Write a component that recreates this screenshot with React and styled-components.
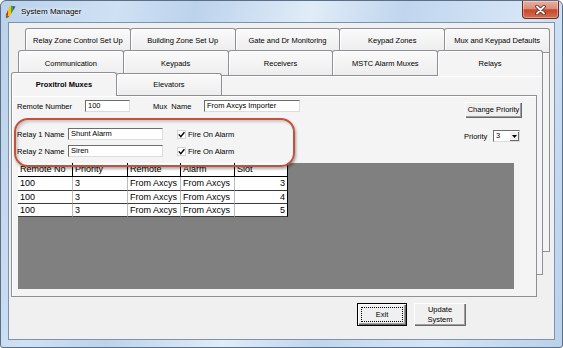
import React from 'react';
import styled, { createGlobalStyle } from 'styled-components';

// page reset + base font
const GlobalStyle = createGlobalStyle`
    html, body {
        margin: 0;
        padding: 0;
        background: #ffffff;
    }
    body {
        font-family: "Liberation Sans", Arial, sans-serif;
        color: #000;
    }
`;

// Aero window frame
const Window = styled.div`
    width: 563px;
    height: 348px;
    box-sizing: border-box;
    border: 1px solid #5b6f86;
    border-radius: 6px 6px 3px 3px;
    background: linear-gradient(105deg, #b9d1ea 0%, #cfe1f4 18%, #bcd3ec 30%, #e0ecf8 48%, #c0d6ee 62%, #d5e5f6 80%, #b9d1ea 100%);
    display: flex;
    flex-direction: column;
    overflow: hidden;
`;

const TitleBar = styled.div`
    height: 21px;
    flex: none;
    display: flex;
    align-items: center;
    padding: 0 3px 0 4px;
`;

const TitleIcon = styled.svg`
    width: 11px;
    height: 14px;
    margin-right: 5px;
    flex: none;
`;

const TitleText = styled.div`
    font-size: 8px;
    text-shadow: 0 0 5px #ffffff, 0 0 3px #ffffff;
`;

const CloseButton = styled.div`
    margin-left: auto;
    align-self: flex-start;
    width: 37px;
    height: 18px;
    box-sizing: border-box;
    border: 1px solid #6e2a1e;
    border-top: none;
    border-radius: 0 0 4px 4px;
    background: linear-gradient(#e9b0a2 0%, #dc8c78 45%, #c7472d 52%, #d2704f 100%);
    box-shadow: inset 0 0 0 1px rgba(255, 255, 255, 0.35);
    display: flex;
    align-items: center;
    justify-content: center;
`;

// grey client area inside the frame
const Client = styled.div`
    flex: 1;
    margin: 0 7px 7px 7px;
    box-sizing: border-box;
    border: 1px solid #7d93ad;
    background: #f0f0f0;
    display: flex;
    flex-direction: column;
`;

// the three tab rows are drawn as stacked pages sharing one grid cell
const PageStack = styled.div`
    display: grid;
`;

const Page = styled.div`
    grid-area: 1 / 1;
    align-self: start;
    justify-self: start;
    margin: ${p => p.$y}px 0 0 ${p => p.$x}px;
    width: ${p => p.$w}px;
    height: ${p => p.$h}px;
    display: flex;
    flex-direction: column;
`;

const TabRow = styled.div`
    display: flex;
    flex: none;
    height: ${p => p.$h}px;
`;

const Tab = styled.div`
    flex: ${p => (p.$w ? `0 0 ${p.$w}px` : '1 1 0')};
    box-sizing: border-box;
    margin-left: -1px;
    margin-top: ${p => (p.$active ? 0 : 1)}px;
    margin-bottom: ${p => (p.$open ? -1 : 0)}px;
    &:first-child {
        margin-left: 0;
    }
    border: 1px solid #8e9096;
    border-bottom: none;
    border-radius: 3px 3px 0 0;
    background: ${p => (p.$open ? '#f4f4f4' : 'linear-gradient(#fafafa, #ededed)')};
    box-shadow: inset 1px 1px 0 #ffffff;
    display: flex;
    align-items: center;
    justify-content: center;
    font-size: 7.5px;
    font-weight: ${p => (p.$active ? 'bold' : 'normal')};
    white-space: nowrap;
    position: relative;
    z-index: ${p => (p.$open ? 1 : 0)};
`;

const PageBody = styled.div`
    flex: 1;
    position: relative;
    box-sizing: border-box;
    border: 1px solid #8e9096;
    background: #f4f4f4;
    box-shadow: inset 1px 1px 0 #ffffff;
    padding: 4px 14px 0 5px;
`;

const FormArea = styled.div`
    display: flex;
`;

const LeftCol = styled.div`
    display: flex;
    flex-direction: column;
`;

const RightCol = styled.div`
    margin-left: auto;
    width: 58px;
    display: flex;
    flex-direction: column;
`;

const FieldRow = styled.div`
    display: flex;
    align-items: center;
    height: 12px;
    margin-top: ${p => p.$mt || 0}px;
`;

const Label = styled.div`
    width: ${p => p.$w}px;
    margin-left: ${p => p.$ml || 0}px;
    flex: none;
    font-size: 7.5px;
    white-space: pre;
`;

const TextBox = styled.div`
    width: ${p => p.$w}px;
    height: 12px;
    flex: none;
    box-sizing: border-box;
    background: #ffffff;
    border: 1px solid;
    border-color: #6d6d6d #dcdcdc #dcdcdc #6d6d6d;
    font-size: 7.5px;
    line-height: 10px;
    padding-left: 2px;
    white-space: nowrap;
    overflow: hidden;
`;

const CheckBox = styled.svg`
    width: 9px;
    height: 9px;
    flex: none;
    margin-left: ${p => p.$ml || 0}px;
`;

const CheckText = styled.div`
    margin-left: 2px;
    font-size: 7.5px;
    white-space: nowrap;
`;

// classic raised push button
const PushButton = styled.div`
    box-sizing: border-box;
    width: ${p => p.$w}px;
    height: ${p => p.$h}px;
    margin-top: ${p => p.$mt || 0}px;
    margin-left: ${p => p.$ml || 0}px;
    flex: none;
    background: #f0f0f0;
    border: ${p => (p.$default ? '1px solid #000' : 'none')};
    box-shadow: inset 1px 1px 0 #ffffff, inset -1px -1px 0 #696969, inset -2px -2px 0 #a0a0a0;
    display: flex;
    align-items: stretch;
    justify-content: center;
    padding: ${p => (p.$default ? 3 : 1)}px;
    font-size: 7.5px;
    line-height: 10px;
    text-align: center;
`;

const ButtonLabel = styled.div`
    flex: 1;
    display: flex;
    align-items: center;
    justify-content: center;
    white-space: nowrap;
    border: 1px dotted ${p => (p.$focus ? '#000' : 'transparent')};
`;

const Combo = styled.div`
    width: 27px;
    height: 12px;
    flex: none;
    box-sizing: border-box;
    background: #ffffff;
    border: 1px solid;
    border-color: #6d6d6d #dcdcdc #dcdcdc #6d6d6d;
    display: flex;
    align-items: stretch;
    font-size: 7.5px;
    line-height: 10px;
`;

const ComboValue = styled.div`
    flex: 1;
    padding-left: 2px;
`;

const ComboArrow = styled.div`
    width: 10px;
    background: #f0f0f0;
    box-shadow: inset 1px 1px 0 #ffffff, inset -1px -1px 0 #696969;
    display: flex;
    align-items: center;
    justify-content: center;
`;

// the flex grid with its grey empty area
const GridArea = styled.div`
    width: 496px;
    height: 126px;
    margin: 6px 0 0 1px;
    box-sizing: border-box;
    background: #808080;
`;

const GridRow = styled.div`
    display: grid;
    grid-template-columns: 55px 55px 53px 54px 53px;
    width: 270px;
    height: ${p => p.$h}px;
    background: #ffffff;
`;

const Cell = styled.div`
    box-sizing: border-box;
    border-right: 1px solid ${p => (p.$head || p.$last ? '#000' : '#bdbdbd')};
    border-bottom: 1px solid ${p => (p.$head ? '#000' : '#3a3a3a')};
    padding: 0 2px;
    font-size: 9px;
    line-height: 12px;
    text-align: ${p => (p.$right ? 'right' : 'left')};
    white-space: nowrap;
    overflow: hidden;
`;

// red highlight drawn over the relay fields
const Highlight = styled.div`
    position: absolute;
    left: 2px;
    top: 22px;
    width: 281px;
    height: 49px;
    box-sizing: border-box;
    border: 2.5px solid #c4503d;
    border-radius: 14px;
    box-shadow: 1px 2px 3px rgba(0, 0, 0, 0.35), inset 2px 2px 3px rgba(0, 0, 0, 0.18);
    z-index: 2;
`;

const ButtonBar = styled.div`
    display: flex;
    gap: 7px;
    margin-top: 6px;
    padding-left: 348px;
`;

const BACK_TABS = ['Relay Zone Control Set Up', 'Building Zone Set Up', 'Gate and Dr Monitoring', 'Keypad Zones', 'Mux and Keypad Defaults'];
const MID_TABS = ['Communication', 'Keypads', 'Receivers', 'MSTC Alarm Muxes', 'Relays'];

const HEAD = ['Remote No', 'Priority', 'Remote', 'Alarm', 'Slot'];
const ROWS = [
    { h: 14, cells: ['100', '3', 'From Axcys', 'From Axcys', '3'] },
    { h: 13, cells: ['100', '3', 'From Axcys', 'From Axcys', '4'] },
    { h: 13, cells: ['100', '3', 'From Axcys', 'From Axcys', '5'] },
];

const PenIcon = () => (
    <TitleIcon viewBox="0 0 11 14">
        <defs>
            <linearGradient id="pen" x1="0" y1="0" x2="1" y2="0">
                <stop offset="0" stopColor="#d2232a" />
                <stop offset="0.25" stopColor="#d2232a" />
                <stop offset="0.25" stopColor="#f5c400" />
                <stop offset="0.5" stopColor="#f5c400" />
                <stop offset="0.5" stopColor="#3aa34a" />
                <stop offset="0.75" stopColor="#3aa34a" />
                <stop offset="0.75" stopColor="#5a3ea8" />
                <stop offset="1" stopColor="#5a3ea8" />
            </linearGradient>
        </defs>
        <polygon points="5,0.5 10.5,1.5 4.5,11.5 0.8,10" fill="url(#pen)" />
        <polygon points="0.8,10 4.5,11.5 1,13.6" fill="#8a5a2a" />
    </TitleIcon>
);

const CloseGlyph = () => (
    <svg width="13" height="10" viewBox="0 0 13 10">
        <path d="M3 1.5 L10 8.5 M10 1.5 L3 8.5" stroke="#4a1a10" strokeWidth="3.4" strokeLinecap="round" />
        <path d="M3 1.5 L10 8.5 M10 1.5 L3 8.5" stroke="#ffffff" strokeWidth="1.9" strokeLinecap="round" />
    </svg>
);

const Check = ({ ml }) => (
    <CheckBox $ml={ml} viewBox="0 0 9 9">
        <rect x="0.5" y="0.5" width="8" height="8" fill="#fff" stroke="#d4d4d4" />
        <path d="M1.8 4.4 L3.8 6.6 L7.4 2.2" fill="none" stroke="#000" strokeWidth="1.4" />
    </CheckBox>
);

const App = () => {
    return (
        <>
            <GlobalStyle />
            <Window>
                <TitleBar>
                    <PenIcon />
                    <TitleText>System Manager</TitleText>
                    <CloseButton>
                        <CloseGlyph />
                    </CloseButton>
                </TitleBar>
                <Client>
                    <PageStack>
                        <Page $x={16} $y={4} $w={525} $h={225}>
                            <TabRow $h={25}>
                                {BACK_TABS.map(t => <Tab key={t}>{t}</Tab>)}
                            </TabRow>
                            <PageBody />
                        </Page>
                        <Page $x={9} $y={26} $w={525} $h={226}>
                            <TabRow $h={26}>
                                {MID_TABS.map(t => <Tab key={t} $open={t === 'Relays'}>{t}</Tab>)}
                            </TabRow>
                            <PageBody />
                        </Page>
                        <Page $x={2} $y={49} $w={526} $h={225}>
                            <TabRow $h={23}>
                                <Tab $w={106} $active $open>Proxitrol Muxes</Tab>
                                <Tab $w={106}>Elevators</Tab>
                            </TabRow>
                            <PageBody>
                                <FormArea>
                                    <LeftCol>
                                        <FieldRow>
                                            <Label $w={68}>Remote Number</Label>
                                            <TextBox $w={45}>100</TextBox>
                                            <Label $w={51} $ml={23}>Mux  Name</Label>
                                            <TextBox $w={96}>From Axcys Importer</TextBox>
                                        </FieldRow>
                                        <FieldRow $mt={16}>
                                            <Label $w={51}>Relay 1 Name</Label>
                                            <TextBox $w={95}>Shunt Alarm</TextBox>
                                            <Check ml={14} />
                                            <CheckText>Fire On Alarm</CheckText>
                                        </FieldRow>
                                        <FieldRow $mt={5}>
                                            <Label $w={51}>Relay 2 Name</Label>
                                            <TextBox $w={95}>Siren</TextBox>
                                            <Check ml={14} />
                                            <CheckText>Fire On Alarm</CheckText>
                                        </FieldRow>
                                    </LeftCol>
                                    <RightCol>
                                        <PushButton $w={57} $h={16} $mt={2} $ml={1}>
                                            <ButtonLabel>Change Priority</ButtonLabel>
                                        </PushButton>
                                        <FieldRow $mt={12}>
                                            <Label $w={29}>Priority</Label>
                                            <Combo>
                                                <ComboValue>3</ComboValue>
                                                <ComboArrow>
                                                    <svg width="5" height="3" viewBox="0 0 5 3">
                                                        <polygon points="0,0 5,0 2.5,3" fill="#000" />
                                                    </svg>
                                                </ComboArrow>
                                            </Combo>
                                        </FieldRow>
                                    </RightCol>
                                </FormArea>
                                <GridArea>
                                    <GridRow $h={14}>
                                        {HEAD.map((h, i) => (
                                            <Cell key={h} $head $last={i === 4}>{h}</Cell>
                                        ))}
                                    </GridRow>
                                    {ROWS.map((r, ri) => (
                                        <GridRow key={ri} $h={r.h}>
                                            {r.cells.map((c, i) => (
                                                <Cell key={i} $last={i === 4} $right={i === 4}>{c}</Cell>
                                            ))}
                                        </GridRow>
                                    ))}
                                </GridArea>
                                <Highlight />
                            </PageBody>
                        </Page>
                    </PageStack>
                    <ButtonBar>
                        <PushButton $w={50} $h={23} $default>
                            <ButtonLabel $focus>Exit</ButtonLabel>
                        </PushButton>
                        <PushButton $w={52} $h={23}>
                            <ButtonLabel>Update<br />System</ButtonLabel>
                        </PushButton>
                    </ButtonBar>
                </Client>
            </Window>
        </>
    );
};

export default App;
